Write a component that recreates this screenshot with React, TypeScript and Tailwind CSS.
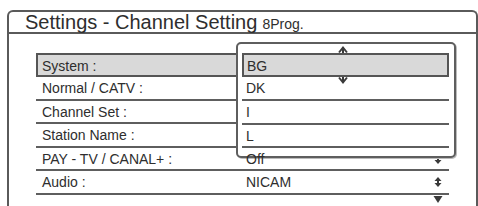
const rows = [
  { label: "Normal / CATV :", value: "", h: "h-[24px]", arrow: false },
  { label: "Channel Set :", value: "", h: "h-[23px]", arrow: false },
  { label: "Station Name :", value: "", h: "h-[24px]", arrow: false },
  { label: "PAY - TV / CANAL+ :", value: "Off", h: "h-[23px]", arrow: true },
  { label: "Audio :", value: "NICAM", h: "h-[24px]", arrow: true },
];

const options = [
  { label: "DK", h: "h-[24px]" },
  { label: "I", h: "h-[24px]" },
  { label: "L", h: "h-[23px]" },
];

function UpDown() {
  return (
    <svg width="8" height="10" viewBox="0 0 8 10" className="block">
      <polygon points="4,0 7.5,4 0.5,4" fill="#3a3a3a" />
      <rect x="3" y="3.5" width="2" height="3" fill="#3a3a3a" />
      <polygon points="0.5,6 7.5,6 4,10" fill="#3a3a3a" />
    </svg>
  );
}

export default function App() {
  return (
    <div className="relative w-[478px] h-[206px] overflow-hidden bg-white text-[#2e2e2e] font-['Liberation_Sans',Arial,sans-serif]">
      <div className="ml-[7px] mt-[10px] w-[471px] h-[210px] border-2 border-b-0 border-[#5a5a5a] rounded-t-[6px]">
        {/* title bar */}
        <div className="h-[22px] border-b-2 border-[#5a5a5a] pl-[16px] flex items-baseline whitespace-nowrap">
          <span className="text-[20px] leading-[20px]">Settings - Channel Setting</span>
          <span className="ml-[5px] text-[14px] leading-[20px]">8Prog.</span>
        </div>

        {/* rows */}
        <div className="ml-[27px] pt-[19px] w-[413px]">
          <div className="h-[24px] border-2 border-[#555] bg-[#d9d9d9] flex items-center pl-[4px] pt-px text-[14px] leading-[20px]">
            System :
          </div>
          {rows.map((r) => (
            <div
              key={r.label}
              className={`${r.h} border-b-2 border-[#5e5e5e] flex items-center text-[14px] leading-[20px]`}
            >
              <div className="w-[210px] pl-[6px] whitespace-nowrap">{r.label}</div>
              <div className="flex-1 relative z-20">{r.value}</div>
              {r.arrow && (
                <div className="pr-[7px]">
                  <UpDown />
                </div>
              )}
            </div>
          ))}
          <div className="flex justify-end pr-[6px] pt-[1px]">
            <svg width="10" height="7" viewBox="0 0 10 7" className="block">
              <polygon points="0.5,0 9.5,0 5,7" fill="#3a3a3a" />
            </svg>
          </div>
        </div>
      </div>

      {/* pop-up list */}
      <div className="absolute z-10 left-[236px] top-[42px] w-[220px] h-[116px] border-2 border-[#5e5e5e] rounded-[5px] bg-white pl-[4px] pr-[5px] pt-[9px] shadow-[1px_1px_0_#bbb]">
        <div className="h-[24px] border-2 border-[#555] bg-[#d9d9d9] flex items-center pl-[3px] pt-px text-[14px] leading-[20px]">
          BG
        </div>
        {options.map((o) => (
          <div
            key={o.label}
            className={`${o.h} border-b-2 border-[#5e5e5e] flex items-center pl-[4px] text-[14px] leading-[20px]`}
          >
            {o.label}
          </div>
        ))}
      </div>

      {/* scroll carets on the list */}
      <svg
        width="12"
        height="40"
        viewBox="0 0 12 40"
        className="absolute z-20 left-[337px] top-[45px]"
      >
        <polyline points="2,7.5 6,2.5 10,7.5" fill="none" stroke="#3a3a3a" strokeWidth="2" />
        <line x1="6" y1="2.5" x2="6" y2="8" stroke="#3a3a3a" strokeWidth="2" />
        <line x1="6" y1="32" x2="6" y2="37.5" stroke="#3a3a3a" strokeWidth="2" />
        <polyline points="2,32.5 6,37.5 10,32.5" fill="none" stroke="#3a3a3a" strokeWidth="2" />
      </svg>
    </div>
  );
}
